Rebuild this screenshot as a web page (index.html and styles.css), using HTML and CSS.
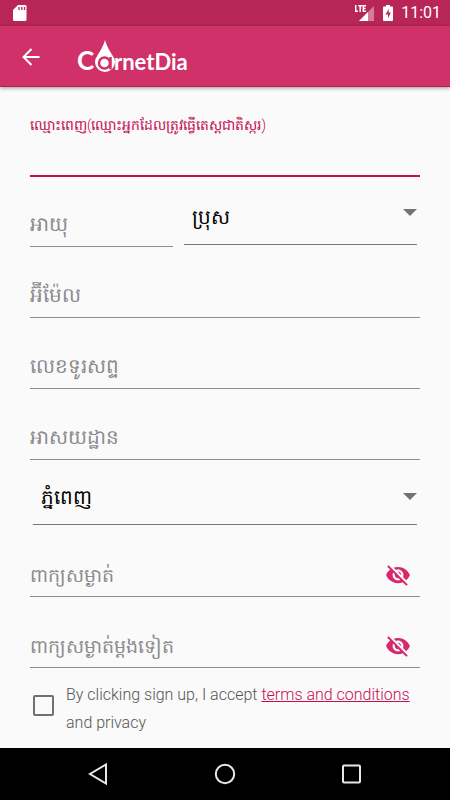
FILE: index.html
```html
<!DOCTYPE html>
<html lang="km">
<head>
<meta charset="utf-8">
<meta name="viewport" content="width=device-width, initial-scale=1">
<title>CarnetDia</title>
<link rel="stylesheet" href="styles.css">
</head>
<body>
<div class="status">
  <svg class="sd" width="14" height="16" viewBox="0 0 14 16"><path fill="#fff" d="M5 0h7a1.500 1.500 0 0 1 1.500 1.500v13a1.500 1.500 0 0 1-1.500 1.500H1.500A1.500 1.500 0 0 1 0 14.500V5z"/><path stroke="#b82658" stroke-width="1.300" d="M6 2v3M8.800 2v3M11.500 2v3"/></svg>
  <div class="status-right">
    <svg width="20" height="16" viewBox="0 0 20 16"><path fill="#d67b9b" d="M19 1v15H4z"/><path fill="#fff" d="M13 7v9H4z"/><path fill="none" stroke="#b82658" stroke-width="3" d="M0 4.500h11"/><path fill="none" stroke="#fff" stroke-width="1.500" d="M.700 0v6.300H3M3.200.700h4M5.200.700V7M11 .700H8.300v5.600H11M8.300 3.500h2.300"/></svg>
    <svg width="10" height="16" viewBox="0 0 10 16"><path fill="#fff" d="M3 0h4v1.500h2a1 1 0 0 1 1 1V15a1 1 0 0 1-1 1H1a1 1 0 0 1-1-1V2.500a1 1 0 0 1 1-1h2z"/><path fill="#b82658" d="M6 3.500 2.500 9.500H5v4L7.800 7.500H5.500z"/></svg>
    <span class="clock">11:01</span>
  </div>
</div>
<header class="bar">
  <button class="back" type="button" aria-label="Back"><svg width="18" height="18" viewBox="0 0 18 18"><path fill="none" stroke="#fff" stroke-width="2" d="M17.500 9H1.500M9.500 1 1.500 9l8 8"/></svg></button>
  <svg class="logo" width="114" height="36" viewBox="0 0 114 36" role="img" aria-label="CarnetDia">
    <text class="initial" x="-1" y="31">C</text>
    <path fill="#fff" d="M27 1C25 8 22 12 19.500 16.500A10 10 0 1 0 34.500 16.500C32 12 29 8 27 1z"/>
    <circle cx="26.500" cy="24" r="5.500" fill="#fff" stroke="#cf3168" stroke-width="2.500"/>
    <path stroke="#cf3168" stroke-width="2.500" d="M32.500 18v12.500"/>
    <text x="36" y="31">rnetDia</text>
  </svg>
</header>
<main>
  <form class="form">
    <div class="field name">
      <label for="name">ឈ្មោះពេញ(ឈ្មោះអ្នកដែលត្រូវធ្វើតេស្តជាតិស្ករ)</label>
      <input id="name" type="text">
    </div>
    <div class="row">
      <div class="field age"><input type="text" placeholder="អាយុ" aria-label="អាយុ"></div>
      <div class="pick sex"><select aria-label="ភេទ"><option>ប្រុស</option></select></div>
    </div>
    <div class="field"><input type="text" placeholder="អ៊ីម៉ែល" aria-label="អ៊ីម៉ែល"></div>
    <div class="field"><input type="text" placeholder="លេខទូរសព្ទ" aria-label="លេខទូរសព្ទ"></div>
    <div class="field"><input type="text" placeholder="អាសយដ្ឋាន" aria-label="អាសយដ្ឋាន"></div>
    <div class="pick city"><select aria-label="ទីក្រុង"><option>ភ្នំពេញ</option></select></div>
    <div class="field secret"><input type="password" placeholder="ពាក្យសម្ងាត់" aria-label="ពាក្យសម្ងាត់">
      <button class="eye" type="button" aria-label="Show password"><svg width="26" height="26" viewBox="0 0 24 24"><path fill="#d6286a" d="M12 7c2.760 0 5 2.240 5 5 0 .650-.130 1.260-.360 1.830l2.920 2.920c1.510-1.260 2.700-2.890 3.430-4.750-1.730-4.390-6-7.500-11-7.500-1.400 0-2.740.250-3.980.700l2.160 2.160C10.740 7.130 11.350 7 12 7zM2 4.270l2.280 2.280.460.460C3.080 8.300 1.780 10.020 1 12c1.730 4.390 6 7.500 11 7.500 1.550 0 3.030-.300 4.380-.840l.420.420L19.730 22 21 20.730 3.270 3 2 4.270zM7.530 9.800l1.550 1.550c-.050.210-.080.430-.080.650 0 1.660 1.340 3 3 3 .220 0 .440-.030.650-.080l1.550 1.550c-.670.330-1.410.530-2.200.530-2.760 0-5-2.240-5-5 0-.790.200-1.530.530-2.200zm4.310-.780 3.150 3.150.020-.160c0-1.660-1.340-3-3-3z"/></svg></button></div>
    <div class="field secret"><input type="password" placeholder="ពាក្យសម្ងាត់ម្តងទៀត" aria-label="ពាក្យសម្ងាត់ម្តងទៀត">
      <button class="eye" type="button" aria-label="Show password"><svg width="26" height="26" viewBox="0 0 24 24"><path fill="#d6286a" d="M12 7c2.760 0 5 2.240 5 5 0 .650-.130 1.260-.360 1.830l2.920 2.920c1.510-1.260 2.700-2.890 3.430-4.750-1.730-4.390-6-7.500-11-7.500-1.400 0-2.740.250-3.980.700l2.160 2.160C10.740 7.130 11.350 7 12 7zM2 4.270l2.280 2.280.460.460C3.080 8.300 1.780 10.020 1 12c1.730 4.390 6 7.500 11 7.500 1.550 0 3.030-.300 4.380-.840l.420.420L19.730 22 21 20.730 3.270 3 2 4.270zM7.530 9.800l1.550 1.550c-.050.210-.080.430-.080.650 0 1.660 1.340 3 3 3 .220 0 .440-.030.650-.080l1.550 1.550c-.670.330-1.410.530-2.200.530-2.760 0-5-2.240-5-5 0-.790.200-1.530.530-2.200zm4.310-.780 3.150 3.150.020-.160c0-1.660-1.340-3-3-3z"/></svg></button></div>
    <div class="terms">
      <input id="accept" type="checkbox">
      <label for="accept">By clicking sign up, I accept <a href="#">terms and conditions</a> and privacy</label>
    </div>
  </form>
</main>
<nav class="nav">
  <button type="button" aria-label="Back"><svg width="22" height="22" viewBox="0 0 22 22"><path d="M18 1.500v19L2 11z"/></svg></button>
  <button type="button" aria-label="Home"><svg width="22" height="22" viewBox="0 0 22 22"><circle cx="11" cy="11" r="9.200"/></svg></button>
  <button type="button" aria-label="Recents"><svg width="22" height="22" viewBox="0 0 22 22"><rect x="3" y="2.500" width="17" height="17" rx="1"/></svg></button>
</nav>
</body>
</html>
```
FILE: styles.css
```css
* { box-sizing: border-box; }
body {
  margin: 0;
  min-height: 100vh;
  display: flex;
  flex-direction: column;
  background: #fafafa;
  font-family: Roboto, "Noto Sans", sans-serif;
}
button { border: 0; padding: 0; background: none; display: flex; }
.status {
  height: 26px;
  padding: 0 9px 0 13px;
  display: flex;
  align-items: center;
  justify-content: space-between;
  background: #b82658;
}
.status-right { display: flex; align-items: center; gap: 8px; }
.clock { color: #fff; font-size: 16px; line-height: 28px; }
.bar {
  height: 61px;
  padding: 0 22px;
  display: flex;
  align-items: center;
  gap: 38px;
  background: #cf3168;
  border-bottom: 1px solid #c2185b;
  box-shadow: 0 1px 4px rgba(0, 0, 0, .4);
}
.back { padding-top: 1px; }
.logo { margin-top: 2px; overflow: visible; }
.logo text { fill: #fff; font: 700 22px Lato, sans-serif; }
.logo .initial { font-size: 26px; }
main { flex: 1; padding: 27px 30px 0; }
.field {
  height: 71px;
  display: flex;
  align-items: flex-end;
  border-bottom: 1px solid #8c8c8c;
}
.field input {
  flex: 1;
  min-width: 0;
  width: 100%;
  height: 44px;
  padding: 0;
  border: 0;
  outline: 0;
  background: none;
  color: #222;
  font: 300 20px/44px Roboto, "Noto Sans", sans-serif;
}
.field input::placeholder { color: #8c8c8c; opacity: 1; }
.name {
  height: 63px;
  flex-direction: column;
  align-items: stretch;
  border-bottom: 2px solid #c60c51;
}
.name label { color: #c60c51; font-size: 14px; font-weight: 300; line-height: 22px; }
.name input { height: 38px; }
.row { display: flex; align-items: flex-start; }
.row .field { height: 70px; }
.age { flex: 143; }
.sex { flex: 234; margin: 0 3px 0 11px; }
.pick {
  position: relative;
  border-bottom: 1px solid #757575;
}
.pick select {
  appearance: none;
  width: 100%;
  height: 54px;
  padding: 0 8px;
  border: 0;
  background: none;
  color: #000;
  font: 300 20px/54px Roboto, "Noto Sans", sans-serif;
}
.pick::after {
  content: "";
  position: absolute;
  right: 0;
  border: 7px solid transparent;
  border-top-color: #737373;
  border-bottom: 0;
  pointer-events: none;
}
.sex { padding-top: 13px; }
.sex::after { top: 32px; }
.city { margin: 0 3px; padding-top: 10px; }
.city::after { top: 33px; }
.secret input { height: 40px; font-size: 19px; }
.secret { height: 72px; }
.secret + .secret { height: 71px; }
.eye { margin: 0 9px 8px 0; }
.terms { display: flex; align-items: flex-start; gap: 12px; padding: 13px 0 10px 3px; }
.terms input {
  appearance: none;
  flex: none;
  width: 21px;
  height: 21px;
  margin: 14px 0 0;
  border: 2px solid #707070;
  border-radius: 2px;
}
.terms label { color: #555; font-size: 16px; font-weight: 300; line-height: 28px; }
.terms a { color: #c60c51; }
.nav {
  height: 52px;
  padding: 0 36px;
  display: flex;
  align-items: center;
  justify-content: space-around;
  background: #000;
}
.nav svg { fill: none; stroke: #e8e8e8; stroke-width: 2; }
```
